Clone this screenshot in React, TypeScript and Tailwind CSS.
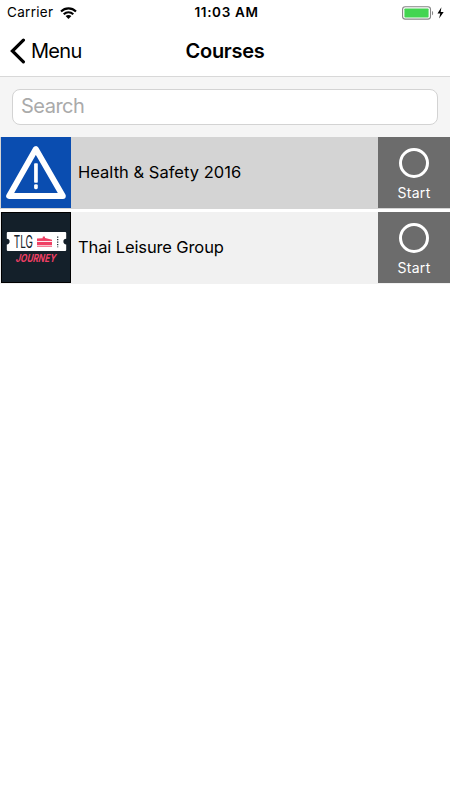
import React from 'react';

interface Course {
    id: number;
    title: string;
    rowClass: string;
    titleClass: string;
    thumb: React.ReactNode;
}

const WifiIcon = () => (
    <svg className="w-[17px] h-3" viewBox="0 0 17 12">
        <g fill="none" stroke="#000" strokeWidth="2.1">
            <path d="M1 4.4C5.3 .3 11.7 .3 16 4.4" />
            <path d="M3.7 7.3C6.5 4.7 10.5 4.7 13.3 7.3" />
        </g>
        <path d="M5.6 9.1C7.3 7.6 9.7 7.6 11.4 9.1L8.5 12Z" />
    </svg>
);

const BatteryIcon = () => (
    <svg className="w-[43px] h-[14px]" viewBox="0 0 43 14">
        <rect x=".6" y=".7" width="27.9" height="12.4" rx="2.6" fill="#fff" stroke="#858585" strokeWidth="1.1" />
        <rect x="2.4" y="2.5" width="24.2" height="9" rx=".8" fill="#43d551" />
        <path d="M30.1 5v4.2c1.4-.5 1.4-3.7 0-4.2Z" fill="#777" />
        <path d="M39.4 1.3 35.5 7.5h2.8l-1.2 5L41.7 6h-3Z" fill="#000" />
    </svg>
);

const WarningThumb = () => (
    <svg className="w-full h-full" viewBox="0 0 70 71" preserveAspectRatio="none">
        <rect width="70" height="71" fill="#0a4db0" />
        <path d="M34.8 12 8.1 59h53.8Z" fill="none" stroke="#fff" strokeWidth="5.8" strokeLinejoin="round" />
        <rect x="33.1" y="26.2" width="3.7" height="19.6" rx=".8" fill="#fff" />
        <rect x="33.1" y="47.2" width="3.7" height="5" rx="1.4" fill="#fff" />
    </svg>
);

const JourneyThumb = () => (
    <svg className="w-full h-full" viewBox="0 0 70 71" preserveAspectRatio="none">
        <rect width="70" height="71" fill="#14202a" />
        <rect x=".5" y=".5" width="69" height="70" fill="none" stroke="#000" />
        <path d="M6.8 20h57.4q1 0 1 1v5.8a2.8 2.8 0 0 0 0 5.6V38q0 1-1 1H6.8q-1 0-1-1V32.4a2.8 2.8 0 0 0 0-5.6V21q0-1 1-1Z" fill="#fff" />
        <text x="12.8" y="35.8" textLength="19.2" lengthAdjust="spacingAndGlyphs" fontFamily="Inter, sans-serif" fontSize="16.6" fontWeight="400" fill="#14202a">TLG</text>
        <g fill="#ef3f64">
            <path d="M36 29v-2.4l5.6-.4.3-1.6h1.9l.3 1.4 6.9 1.8v1.2Z" />
            <path d="M36 29.8h15v3.4H36z" />
            <path d="M36 33.8h15v1.1H36z" opacity=".75" />
        </g>
        <path d="M36.5 29.4h14" stroke="#fff" strokeWidth=".5" />
        <path d="M56.7 24.5v10.8" stroke="#14202a" strokeWidth="1.2" strokeDasharray="1.2 1.3" />
        <text x="0" y="0" transform="translate(14.2 49.6) skewX(-14)" textLength="40" lengthAdjust="spacingAndGlyphs" fontFamily="Inter, sans-serif" fontSize="11" fontWeight="700" fill="#ef3f64">JOURNEY</text>
    </svg>
);

const courses: Course[] = [
    { id: 1, title: 'Health & Safety 2016', rowClass: 'bg-[#d4d4d4]', titleClass: 'tracking-[0.02px]', thumb: <WarningThumb /> },
    { id: 2, title: 'Thai Leisure Group', rowClass: 'bg-[#f1f1f1]', titleClass: 'tracking-[-0.12px]', thumb: <JourneyThumb /> },
];

const StatusBar = () => (
    <div className="grid grid-cols-3 items-center h-6 pt-px pl-[7px] pr-[5px]">
        <div className="flex items-center gap-[7px] text-[13.5px] tracking-[0.3px]">
            Carrier
            <WifiIcon />
        </div>
        <span className="pl-px text-center text-[13.5px] font-semibold tracking-[0.65px]">11:03 AM</span>
        <div className="flex justify-end">
            <BatteryIcon />
        </div>
    </div>
);

const NavBar = () => (
    <div className="grid grid-cols-3 items-center h-[53px] pt-px border-b border-[#d8d8d8] px-[10px]">
        <button className="flex items-center gap-[5px] text-xl tracking-[-0.7px] text-left">
            <svg className="w-4 h-[26px]" viewBox="0 0 16 26" fill="none" stroke="#000" strokeWidth="3.2" strokeLinecap="round">
                <path d="M13.4 2.2 2.4 13l11 10.8" />
            </svg>
            Menu
        </button>
        <h1 className="text-center text-xl font-semibold tracking-[-0.3px]">Courses</h1>
    </div>
);

const CourseRow = ({ course }: { course: Course }) => (
    <li className={`flex h-[72px] ${course.rowClass}`}>
        <div className="w-[71px] h-[71px] pl-px shrink-0">{course.thumb}</div>
        <div className={`flex flex-1 items-center h-[70px] pl-[7px] text-[16.5px] ${course.titleClass}`}>{course.title}</div>
        <button className="flex flex-col items-center w-[72px] h-[71px] pt-[11px] bg-[#6c6c6c] text-white">
            <span className="w-[30px] h-[30px] rounded-full border-[3.5px] border-white" />
            <span className="mt-[5px] text-[14px] leading-5 tracking-[0.3px]">Start</span>
        </button>
    </li>
);

export default function App() {
    return (
        <main className="w-[450px] h-[800px] bg-white text-black overflow-hidden font-['Inter',sans-serif]">
            <StatusBar />
            <NavBar />
            <div className="h-[60px] px-3 pt-3 bg-[#f5f5f5]">
                <input
                    type="text"
                    placeholder="Search"
                    className="block w-full h-9 px-2 pb-[3px] rounded-lg border border-[#d3d3d3] bg-white text-xl tracking-[-0.5px] placeholder:text-[#aaa] outline-none"
                />
            </div>
            <ul className="flex flex-col gap-[3px]">
                {courses.map(course => (
                    <CourseRow key={course.id} course={course} />
                ))}
            </ul>
        </main>
    );
}
